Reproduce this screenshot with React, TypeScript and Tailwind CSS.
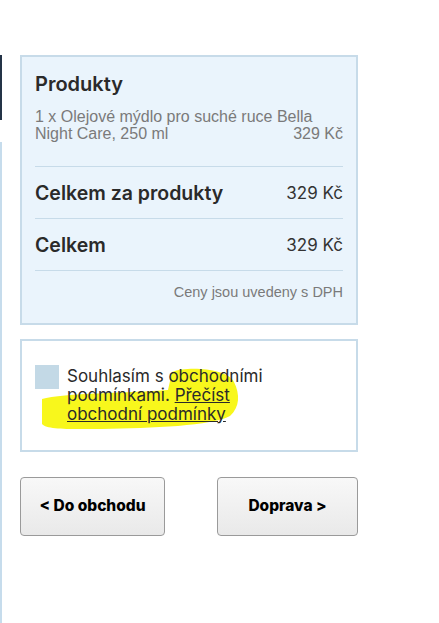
export default function App() {
  return (
    <div className="min-h-[623px] bg-white flex" style={{ fontFamily: 'Inter, "Noto Sans", sans-serif' }}>
      {/* Left edge strip */}
      <div className="w-[2px] flex flex-col shrink-0">
        <div className="mt-[55px] h-[65px] bg-[#243447]" />
        <div className="mt-[22px] flex-1 bg-[#c6dcec]" />
      </div>

      <div className="pl-[18px] pt-[55px] w-[356px] flex flex-col">
        {/* Summary box */}
        <div className="border-2 border-[#c7dbe9] bg-[#eaf4fc] px-[13px] pt-[15px] pb-[23px]">
          <h2 className="text-[20px] leading-[24px] font-semibold text-[#2a2a2a]">Produkty</h2>
          <div
            className="mt-[12px] pb-[24px] text-[16px] leading-[17px] text-[#7a7a7a]"
            style={{ fontFamily: '"Liberation Sans", Arial, sans-serif' }}
          >
            <div>1 x Olejové mýdlo pro suché ruce Bella</div>
            <div className="flex justify-between">
              <span>Night Care, 250 ml</span>
              <span>329 Kč</span>
            </div>
          </div>
          <div className="border-t border-[#c7dbe9] pt-[14px] pb-[13px] flex justify-between items-center">
            <span className="text-[19.5px] leading-[24px] font-semibold text-[#2a2a2a]">Celkem za produkty</span>
            <span className="text-[17px] leading-[24px] text-[#333]">329 Kč</span>
          </div>
          <div className="border-t border-[#c7dbe9] pt-[14px] pb-[13px] flex justify-between items-center">
            <span className="text-[19.5px] leading-[24px] font-semibold text-[#2a2a2a]">Celkem</span>
            <span className="text-[17px] leading-[24px] text-[#333]">329 Kč</span>
          </div>
          <div
            className="border-t border-[#c7dbe9] pt-[13px] text-right text-[14.5px] leading-[16px] text-[#7a7a7a]"
            style={{ fontFamily: '"Liberation Sans", Arial, sans-serif' }}
          >
            Ceny jsou uvedeny s DPH
          </div>
        </div>

        {/* Terms box */}
        <div className="relative mt-[14px] border-2 border-[#c7dbe9] bg-white px-[13px] pt-[24px] pb-[26px]">
          <svg className="absolute left-0 top-0" width="338" height="113" viewBox="0 0 338 113">
            <path
              d="M 20 58 C 40 52, 110 52, 146 49 L 150 31 C 165 25, 205 27, 212 41 C 218 53, 218 66, 208 75 C 190 85, 130 87, 80 88 C 50 88, 25 89, 20 83 Z"
              fill="#f8f71c"
            />
          </svg>
          <div className="relative flex items-start gap-[8px]">
            <div className="w-[24px] h-[24px] bg-[#c3d9e6] shrink-0" />
            <p className="mt-[1.5px] w-[232px] text-[17px] leading-[19px] text-[#2a2a2a]">
              Souhlasím s obchodními podmínkami.{' '}
              <a className="underline">Přečíst obchodní podmínky</a>
            </p>
          </div>
        </div>

        {/* Buttons */}
        <div className="mt-[25px] flex justify-between">
          <button className="w-[145px] h-[59px] rounded-[4px] border border-[#9a9a9a] bg-gradient-to-b from-[#f8f8f8] to-[#e9e9e9] text-[15.5px] font-extrabold text-black">
            &lt; Do obchodu
          </button>
          <button className="w-[141px] h-[59px] rounded-[4px] border border-[#9a9a9a] bg-gradient-to-b from-[#f8f8f8] to-[#e9e9e9] text-[15.5px] font-extrabold text-black">
            Doprava &gt;
          </button>
        </div>
      </div>
    </div>
  );
}
